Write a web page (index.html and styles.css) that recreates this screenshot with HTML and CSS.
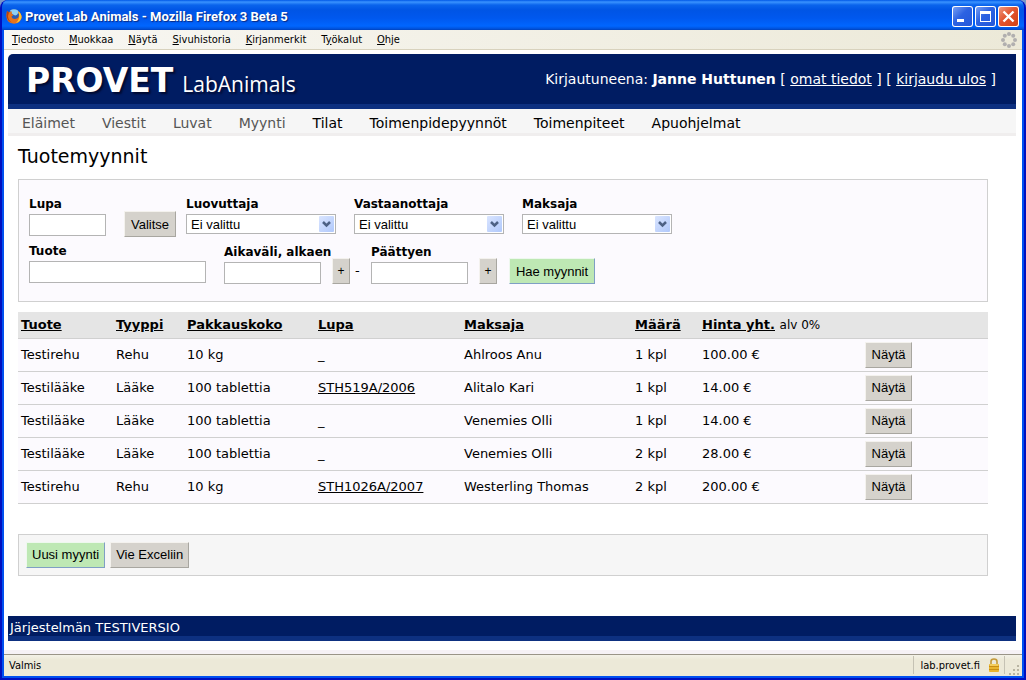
FILE: index.html
```html
<!DOCTYPE html>
<html lang="fi">
<head>
<meta charset="utf-8">
<title>Provet Lab Animals</title>
<link rel="stylesheet" href="styles.css">
</head>
<body>
<div class="window">
  <div class="titlebar">
    <svg class="fox" viewBox="0 0 16 16" width="16" height="16" aria-hidden="true">
      <circle cx="8" cy="8" r="7" fill="#2a5db4"/>
      <path d="M4 2.500Q8 0 12 2.500Q13 6 9.500 7.500Q6 7 4 2.500Z" fill="#8fd0f4"/>
      <path d="M1 3L3 4.500Q4 3.500 6 3.500L5.500 5.500L7.500 7L5.500 8.500Q6 11 9 11Q13 10.500 13 6.500L12 3Q16 6 15.500 10Q14 15.500 8 15.800Q1 15 .500 9Q.300 5.500 1 3Z" fill="#e8731a"/>
      <path d="M12 3Q16 6 15.500 10Q14 14 10 15Q14 11 13 6.500Z" fill="#ffc52e"/>
      <path d="M1 3L3 4.500L2 8Q2 12 6 14.500Q1 13 .600 8Z" fill="#b8400c"/>
    </svg>
    <span class="caption">Provet Lab Animals - Mozilla Firefox 3 Beta 5</span>
    <div class="winbtns">
      <button class="winbtn" type="button" aria-label="Pienennä"><svg viewBox="0 0 21 21" width="21" height="21"><path d="M5 13h7v3h-7z" fill="#fff"/></svg></button>
      <button class="winbtn" type="button" aria-label="Suurenna"><svg viewBox="0 0 21 21" width="21" height="21"><path d="M5 5h11v11h-11zM6 8v7h9v-7z" fill="#fff" fill-rule="evenodd"/></svg></button>
      <button class="winbtn close" type="button" aria-label="Sulje"><svg viewBox="0 0 21 21" width="21" height="21"><path d="M5.500 5.500l10 10M15.500 5.500l-10 10" stroke="#fff" stroke-width="2.400"/></svg></button>
    </div>
  </div>
  <div class="menubar">
    <span><u>T</u>iedosto</span><span><u>M</u>uokkaa</span><span><u>N</u>äytä</span><span><u>S</u>ivuhistoria</span><span><u>K</u>irjanmerkit</span><span>T<u>y</u>ökalut</span><span><u>O</u>hje</span>
    <svg class="throbber" viewBox="0 0 16 16" width="16" height="16" aria-hidden="true"><g fill="#b1afaf"><circle cx="8" cy="2" r="2"/><circle cx="12.200" cy="3.800" r="2"/><circle cx="14" cy="8" r="2"/><circle cx="12.200" cy="12.200" r="2"/><circle cx="8" cy="14" r="2"/><circle cx="3.800" cy="12.200" r="2"/><circle cx="2" cy="8" r="2"/><circle cx="3.800" cy="3.800" r="2"/></g></svg>
  </div>
  <div class="page">
    <header class="header">
      <div class="brand"><strong>PROVET</strong><span>LabAnimals</span></div>
      <div class="user">Kirjautuneena: <b>Janne Huttunen</b> [ <a href="#">omat tiedot</a> ] [ <a href="#">kirjaudu ulos</a> ]</div>
    </header>
    <nav class="nav">
      <a class="dim" href="#">Eläimet</a><a class="dim" href="#">Viestit</a><a class="dim" href="#">Luvat</a><a class="dim" href="#">Myynti</a><a href="#">Tilat</a><a href="#">Toimenpidepyynnöt</a><a href="#">Toimenpiteet</a><a href="#">Apuohjelmat</a>
    </nav>
    <main class="content">
      <h1>Tuotemyynnit</h1>
      <form class="search">
        <div class="line">
          <div class="field permit"><label for="lupa">Lupa</label><input id="lupa" type="text"></div>
          <button class="btn pick" type="button">Valitse</button>
          <div class="field choice"><label for="luov">Luovuttaja</label><div class="drop"><select id="luov"><option>Ei valittu</option></select><svg viewBox="0 0 15 16" width="15" height="16" aria-hidden="true"><path d="M4 6l3.500 3.500L11 6" fill="none" stroke="#4d6185" stroke-width="2.500"/></svg></div></div>
          <div class="field choice"><label for="vast">Vastaanottaja</label><div class="drop"><select id="vast"><option>Ei valittu</option></select><svg viewBox="0 0 15 16" width="15" height="16" aria-hidden="true"><path d="M4 6l3.500 3.500L11 6" fill="none" stroke="#4d6185" stroke-width="2.500"/></svg></div></div>
          <div class="field choice"><label for="maks">Maksaja</label><div class="drop"><select id="maks"><option>Ei valittu</option></select><svg viewBox="0 0 15 16" width="15" height="16" aria-hidden="true"><path d="M4 6l3.500 3.500L11 6" fill="none" stroke="#4d6185" stroke-width="2.500"/></svg></div></div>
        </div>
        <div class="line">
          <div class="field product"><label for="tuote">Tuote</label><input id="tuote" type="text"></div>
          <div class="field date"><label for="alk">Aikaväli, alkaen</label><input id="alk" type="text"></div>
          <button class="btn plus" type="button">+</button>
          <span class="dash">-</span>
          <div class="field date"><label for="paat">Päättyen</label><input id="paat" type="text"></div>
          <button class="btn plus" type="button">+</button>
          <button class="btn green find" type="button">Hae myynnit</button>
        </div>
      </form>
      <table class="sales">
        <colgroup><col class="c1"><col class="c2"><col class="c3"><col class="c4"><col class="c5"><col class="c6"><col class="c7"><col></colgroup>
        <thead><tr><th><a href="#">Tuote</a></th><th><a href="#">Tyyppi</a></th><th><a href="#">Pakkauskoko</a></th><th><a href="#">Lupa</a></th><th><a href="#">Maksaja</a></th><th><a href="#">Määrä</a></th><th><a href="#">Hinta yht.</a> <span>alv 0%</span></th><th></th></tr></thead>
        <tbody>
          <tr><td>Testirehu</td><td>Rehu</td><td>10 kg</td><td>_</td><td>Ahlroos Anu</td><td>1 kpl</td><td>100.00 €</td><td><button class="btn" type="button">Näytä</button></td></tr>
          <tr><td>Testilääke</td><td>Lääke</td><td>100 tablettia</td><td><a href="#">STH519A/2006</a></td><td>Alitalo Kari</td><td>1 kpl</td><td>14.00 €</td><td><button class="btn" type="button">Näytä</button></td></tr>
          <tr><td>Testilääke</td><td>Lääke</td><td>100 tablettia</td><td>_</td><td>Venemies Olli</td><td>1 kpl</td><td>14.00 €</td><td><button class="btn" type="button">Näytä</button></td></tr>
          <tr><td>Testilääke</td><td>Lääke</td><td>100 tablettia</td><td>_</td><td>Venemies Olli</td><td>2 kpl</td><td>28.00 €</td><td><button class="btn" type="button">Näytä</button></td></tr>
          <tr><td>Testirehu</td><td>Rehu</td><td>10 kg</td><td><a href="#">STH1026A/2007</a></td><td>Westerling Thomas</td><td>2 kpl</td><td>200.00 €</td><td><button class="btn" type="button">Näytä</button></td></tr>
        </tbody>
      </table>
      <div class="actions"><button class="btn green" type="button">Uusi myynti</button><button class="btn" type="button">Vie Exceliin</button></div>
    </main>
    <footer class="footer">Järjestelmän TESTIVERSIO</footer>
  </div>
  <div class="statusbar">
    <span class="state">Valmis</span>
    <div class="site">lab.provet.fi
      <svg viewBox="0 0 12 16" width="12" height="16" aria-hidden="true"><path d="M3 8V4.500Q3 2 6 2T9 4.500V8" fill="none" stroke="#c49a3a" stroke-width="1.600"/><rect x="1" y="7" width="10" height="8" rx="1" fill="#e9b52e"/><path d="M1 9.500h10M1 12.500h10" stroke="#c98e12"/><path d="M2 8h8" stroke="#ffe58a"/></svg>
    </div>
    <svg class="grip" viewBox="0 0 14 14" width="14" height="14" aria-hidden="true"><path d="M9 3h2v2h-2zM5 7h2v2h-2zM9 7h2v2h-2zM1 11h2v2h-2zM5 11h2v2h-2zM9 11h2v2h-2z" fill="#b8b4a2"/></svg>
  </div>
</div>
</body>
</html>
```
FILE: styles.css
```css
* { box-sizing: border-box; }
body {
  margin: 0;
  background: #7a96c8;
  font-family: "DejaVu Sans", Verdana, sans-serif;
  font-size: 13px;
  color: #000;
}
a { color: inherit; }
button { font-family: inherit; }

.window {
  display: flex;
  flex-direction: column;
  min-height: 100vh;
  padding: 0 2px 2px;
  border: solid #0010c0;
  border-width: 0 2px 2px;
  border-radius: 8px 8px 0 0;
  background: #0050f0;
  overflow: hidden;
}

.titlebar {
  display: flex;
  align-items: center;
  gap: 3px;
  height: 30px;
  margin: 0 -4px;
  padding: 2px 7px 0 6px;
  background: linear-gradient(#0058e6 0, #3a93ff 2px, #0a64ec 5px, #0055e5 10px, #0058ee 18px, #0066ff 26px, #0050d8 29px, #0040b8 30px);
  color: #fff;
}
.caption {
  flex: 1;
  font: bold 13px Roboto, sans-serif;
  text-shadow: 1px 1px 1px #0a2a80;
}
.winbtns { display: flex; gap: 2px; }
.winbtn {
  width: 21px;
  height: 21px;
  padding: 0;
  border: 0;
  border-radius: 3px;
  box-shadow: inset 0 0 0 1px #fff;
  background: linear-gradient(135deg, #7fa5f5, #2c62e2 45%, #2456d8);
}
.winbtn svg { display: block; }
.close { background: linear-gradient(135deg, #f0a088, #e25530 45%, #d04010); }

.menubar {
  display: flex;
  align-items: center;
  gap: 15px;
  height: 20px;
  padding: 0 5px 0 8px;
  border-bottom: 1px solid #d8d2bd;
  background: linear-gradient(90deg, #f8f7f3, #ece9d8);
  font: 11px "DejaVu Sans Condensed", Tahoma, sans-serif;
}
.throbber { margin-left: auto; }

.page {
  flex: 1;
  display: flex;
  flex-direction: column;
  padding: 4px 6px 4px 4px;
  background: #fff;
}
.header {
  display: flex;
  align-items: center;
  justify-content: space-between;
  height: 55px;
  padding: 0 20px 0 18px;
  border-bottom: 5px solid #0d3080;
  border-top-left-radius: 5px;
  background: #001c62;
  color: #fff;
  font-size: 14px;
}
.brand {
  display: flex;
  align-items: baseline;
  gap: 9px;
  padding-top: 4px;
  font-size: 21px;
  font-family: "Open Sans", sans-serif;
  text-shadow: 2px 2px 2px #000a30;
}
.brand strong { font-family: "DejaVu Sans", sans-serif; font-size: 33px; line-height: 40px; }

.nav {
  display: flex;
  gap: 27px;
  height: 27px;
  padding: 5px 14px 0;
  border-bottom: 3px solid #f0eeee;
  background: #f6f6f6;
  font-size: 14px;
  line-height: 18px;
}
.nav a { text-decoration: none; }
.nav .dim { color: #555; }

.content { padding: 0 28px 0 10px; }
h1 {
  margin: 8px 0 11px;
  font-size: 19px;
  line-height: 24px;
  font-weight: normal;
}

.search {
  padding: 16px 10px 17px;
  border: 1px solid #d0d0d0;
  background: #fcfafe;
}
.line { display: flex; align-items: flex-end; min-height: 41px; }
.line + .line { margin-top: 6px; }
.field { display: flex; flex-direction: column; }
.field label { font-size: 12px; font-weight: bold; line-height: 16px; margin-bottom: 2px; }
.field input {
  width: 100%;
  height: 22px;
  padding: 0 4px;
  border: 1px solid #b4b4b4;
  background: #fff;
}
.permit { width: 77px; align-self: flex-start; }
.product { width: 177px; margin-right: 18px; align-self: flex-start; }
.date { width: 97px; white-space: nowrap; }
.choice { width: 150px; align-self: flex-start; }
.choice + .choice { margin-left: 18px; }
.drop { position: relative; }
.drop select {
  display: block;
  width: 100%;
  height: 20px;
  padding: 0 4px;
  border: 1px solid #b4b4b4;
  border-radius: 0;
  appearance: none;
  background: #fff;
  color: #000;
  font: 13px "Liberation Sans", Arial, sans-serif;
}
.drop svg {
  position: absolute;
  top: 2px;
  right: 2px;
  border-radius: 1px;
  background: linear-gradient(135deg, #dae5ff, #b0c8fb);
  pointer-events: none;
}

.btn {
  height: 26px;
  padding: 0 4px;
  border: 1px solid;
  border-color: #f4f2ee #a8a6a0 #a8a6a0 #f4f2ee;
  background: #d5d2cc;
  color: #000;
  font: 13px "Liberation Sans", Arial, sans-serif;
  white-space: nowrap;
}
.green { background: #bee8b4; border-color: #eef8ee #7f9fc4 #7f9fc4 #eef8ee; }
.pick { width: 52px; margin: 0 10px 0 18px; }
.plus { width: 18px; margin-left: 11px; padding: 0; font-size: 12px; }
.dash { width: 21px; padding-left: 5px; line-height: 26px; }
.find { width: 86px; margin-left: 12px; }

.sales {
  width: 100%;
  margin-top: 10px;
  border-collapse: collapse;
  table-layout: fixed;
  background: #fcfafe;
}
.sales .btn { width: 47px; }
.c1 { width: 95px; }
.c2 { width: 71px; }
.c3 { width: 131px; }
.c4 { width: 146px; }
.c5 { width: 171px; }
.c6 { width: 67px; }
.c7 { width: 163px; }
.sales th {
  height: 26px;
  padding: 0 3px;
  border-bottom: 1px solid #d0d0d0;
  background: #e5e5e5;
  text-align: left;
  white-space: nowrap;
}
.sales th span { font-size: 12px; font-weight: normal; }
.sales td {
  height: 33px;
  padding: 0 3px;
  border-bottom: 1px solid #d0d0d0;
  white-space: nowrap;
}

.actions {
  display: flex;
  gap: 5px;
  margin-top: 30px;
  padding: 7px;
  border: 1px solid #d0d0d0;
  background: #f6f6f6;
}
.actions .btn { padding: 0 5px; }
.footer {
  margin: auto 0 5px;
  height: 25px;
  padding-left: 2px;
  border-bottom: 5px solid #0d3080;
  background: #001c62;
  color: #fff;
  line-height: 24px;
}

.statusbar {
  display: flex;
  align-items: center;
  height: 26px;
  padding-bottom: 0;
  border-top: 4px solid #f6f2f6;
  background: linear-gradient(#9a9588 1px, #f4f2e8 1px, #ece9d8 6px);
  background-clip: padding-box;
  font: 11px "DejaVu Sans Condensed", Tahoma, sans-serif;
}
.state { flex: 1; padding-left: 5px; }
.site {
  display: flex;
  align-items: center;
  gap: 8px;
  height: 18px;
  padding: 0 4px 0 6px;
  border: solid #c5c2b4;
  border-width: 0 1px;
}
.grip { margin-left: 3px; align-self: flex-end; }
```
